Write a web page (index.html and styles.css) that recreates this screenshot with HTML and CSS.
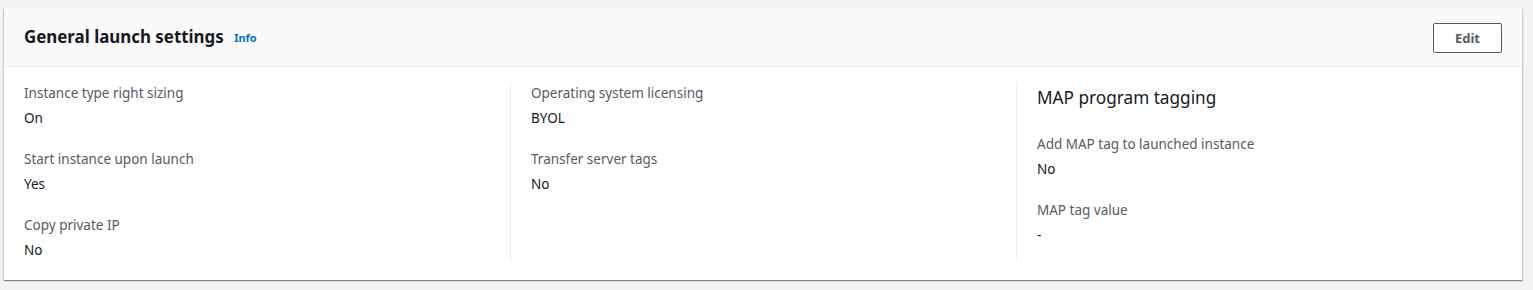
FILE: index.html
```html
<!DOCTYPE html>
<html lang="en">
<head>
    <meta charset="UTF-8">
    <title>General launch settings</title>
    <link rel="stylesheet" href="styles.css">
</head>
<body>
<div class="panel">
    <div class="panel-header">
        <h2 class="panel-title">General launch settings <a class="info" href="#">Info</a></h2>
        <button class="btn">Edit</button>
    </div>
    <div class="panel-body">
        <div class="col">
            <div class="pair">
                <div class="label">Instance type right sizing</div>
                <div class="value">On</div>
            </div>
            <div class="pair">
                <div class="label">Start instance upon launch</div>
                <div class="value">Yes</div>
            </div>
            <div class="pair">
                <div class="label">Copy private IP</div>
                <div class="value">No</div>
            </div>
        </div>
        <div class="col">
            <div class="pair">
                <div class="label">Operating system licensing</div>
                <div class="value">BYOL</div>
            </div>
            <div class="pair">
                <div class="label">Transfer server tags</div>
                <div class="value">No</div>
            </div>
        </div>
        <div class="col">
            <h3 class="col-title">MAP program tagging</h3>
            <div class="pair">
                <div class="label">Add MAP tag to launched instance</div>
                <div class="value">No</div>
            </div>
            <div class="pair">
                <div class="label">MAP tag value</div>
                <div class="value">-</div>
            </div>
        </div>
    </div>
</div>
</body>
</html>
```

FILE: styles.css
```css
html, body {
    margin: 0;
    padding: 0;
}
body {
    background: #f2f3f3;
    font-family: "Noto Sans", "Open Sans", sans-serif;
    font-size: 13.5px;
    color: #16191f;
    padding: 8px 11px 10px 4px;
}
.panel {
    background: #fff;
    box-shadow: 0 1px 1px 0 rgba(0, 28, 36, .3), 1px 1px 1px 0 rgba(0, 28, 36, .15), -1px 1px 1px 0 rgba(0, 28, 36, .15);
}
.panel-header {
    display: flex;
    align-items: center;
    justify-content: space-between;
    background: #fafafa;
    border-bottom: 1px solid #eaeded;
    height: 59px;
    padding: 0 20px;
    box-sizing: border-box;
}
.panel-title {
    margin: 1px 0 0;
    font-size: 16.9px;
    font-weight: 700;
    line-height: 24px;
}
.info {
    color: #0073bb;
    font-size: 11px;
    font-weight: 700;
    text-decoration: none;
    margin-left: 6px;
    vertical-align: middle;
}
.btn {
    font-family: inherit;
    font-size: 13px;
    font-weight: 700;
    color: #545b64;
    background: #fff;
    border: 1px solid #545b64;
    border-radius: 2px;
    width: 69px;
    height: 30px;
    padding: 0;
    margin-top: 1px;
}
.panel-body {
    display: grid;
    grid-template-columns: 1fr 1fr 1fr;
    padding: 15px 0 19px;
}
.col {
    padding: 0 20px;
}
.col + .col {
    border-left: 1px solid #eaeded;
}
.col-title {
    margin: 4px 0 23px;
    font-size: 17.2px;
    font-weight: 400;
    line-height: 24px;
}
.pair + .pair {
    margin-top: 19px;
}
.label {
    color: #545b64;
    line-height: 22px;
}
.value {
    margin-top: 3px;
    line-height: 22px;
}
```
